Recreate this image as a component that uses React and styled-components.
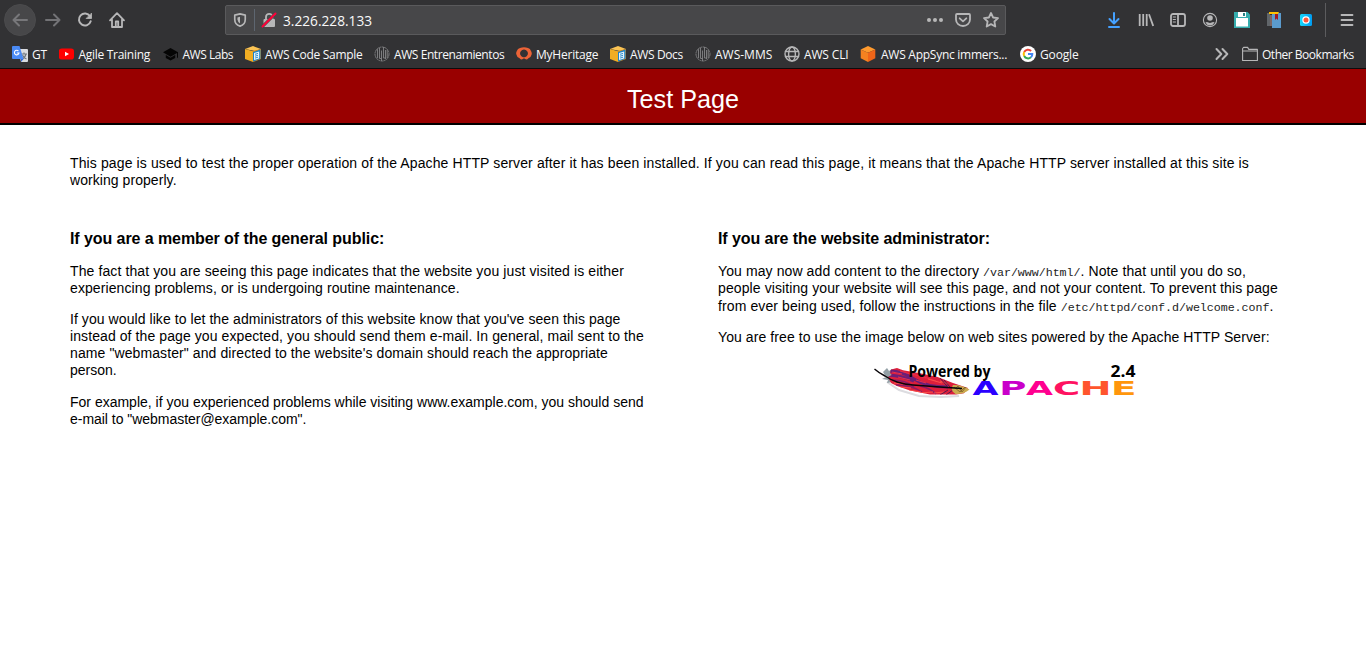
import React from 'react';
import styled, { createGlobalStyle } from 'styled-components';

const Global = createGlobalStyle`
  * { box-sizing: border-box; }
  body { margin: 0; background: #fff; color: #000; font-family: "Liberation Sans", Arial, sans-serif; overflow: hidden; }
  svg { display: block; flex: none; }
`;
const Page = styled.div`height: 665px; display: flex; flex-direction: column;`;
const Chrome = styled.div`
  height: 69px; background: #323234; border-bottom: 1px solid #0c0c0d; color: #f9f9fa;
  font-family: "Open Sans", "Noto Sans", sans-serif;
`;
const NavBar = styled.div`height: 40px; display: flex; align-items: center; padding: 0 11px 0 4px;`;
const BackButton = styled.div`
  width: 32px; height: 32px; border-radius: 50%; background: #474749; border: 1px solid #4b4b4d;
  display: flex; align-items: center; justify-content: center;
`;
const NavIcon = styled.div`width: 16px; margin-left: ${p => p.$gap ?? 16}px;`;
const AddressBar = styled.div`
  width: 781px; height: 30px; margin-left: 100px; padding: 0 6px 0 7px; display: flex; align-items: center;
  background: #474749; border: 1px solid #5a5a5c; border-radius: 2px;
`;
const AddressDivider = styled.div`width: 1px; height: 22px; background: #5e6670; margin: 0 6px 0 7px;`;
const Address = styled.div`flex: 1; margin-left: 6px; padding-top: 1px; font-size: 13.7px; line-height: 18px; white-space: nowrap;`;
const AddressActions = styled.div`display: flex; gap: 12px;`;
const Tools = styled.div`display: flex; gap: 16px; margin-left: 100px;`;
const ToolDivider = styled.div`width: 1px; height: 34px; background: #5c5c5e; margin: 0 13px 0 11px;`;
const BookmarkBar = styled.div`height: 28px; padding: 0 12px; display: flex; align-items: center;`;
const Bookmark = styled.div`
  width: ${p => p.$width}px; display: flex; align-items: center; gap: ${p => p.$gap ?? 4}px; flex: none;
  font-size: 12px; line-height: 18px; letter-spacing: ${p => p.$track ?? 0}px; white-space: nowrap;
  span { padding-top: 2px; }
`;
const Overflow = styled.div`margin-left: auto; margin-right: 12px;`;
const Banner = styled.header`
  height: 56px; background: #900; border-bottom: 2px solid #000; padding-top: 16px; color: #fff;
  h1 { margin: 0; font-size: 25.2px; line-height: 29px; font-weight: 400; text-align: center; }
`;
const Content = styled.main`padding: 30px 70px 0; font-size: 14px; line-height: 17px;`;
const Paragraph = styled.p`margin: 0 0 ${p => p.$after ?? 14}px;`;
const Line = styled.span`display: block; white-space: nowrap; letter-spacing: ${p => p.$track ?? 0}px; padding-top: ${p => p.$lead ?? 0}px;`;
const Columns = styled.div`display: grid; grid-template-columns: 578px 578px; column-gap: 70px; margin-top: 41px;`;
const Heading = styled.h2`margin: 0 0 15px; font-size: 16px; line-height: 18px; letter-spacing: -0.075px;`;
const Code = styled.code`font-family: "Liberation Mono", monospace; font-size: 11.67px; line-height: 1; letter-spacing: -0.04px; color: #222;`;
const Logo = styled.div`display: flex; justify-content: center; margin-top: 15px;`;

const Stroke = ({ children, color = '#b7b7b8', width = 2, size = 16 }) => (
  <svg width={size} height={size} viewBox="0 0 16 16" fill="none" stroke={color} strokeWidth={width} strokeLinecap="round" strokeLinejoin="round">{children}</svg>
);

const GT = () => (
  <svg width="16" height="16" viewBox="0 0 16 16">
    <path d="M6 3h9q1 0 1 1v11q0 1-1 1H9z" fill="#dadce0" />
    <path d="M9 8h6M12 6.5V8M14 8q-1 4-4 5M10.5 9q1 3 4 4" stroke="#70777f" fill="none" strokeWidth="1.1" />
    <path d="M1 0h6.5l4 13H1q-1 0-1-1V1q0-1 1-1z" fill="#4a8af4" />
    <path d="M9 13h2.5L9 16z" fill="#3367d6" />
    <path d="M6.4 5a2.3 2.3 0 1 0 .6 2H4.8" stroke="#fff" fill="none" strokeWidth="1.1" />
  </svg>
);
const YouTube = () => (
  <svg width="16" height="16" viewBox="0 0 16 16"><rect x="-.2" y="2.4" width="15.2" height="11.2" rx="2.8" fill="#f00" /><path d="M6 5.7v4.6L10 8z" fill="#fff" /></svg>
);
const Cap = () => (
  <svg width="16" height="16" viewBox="0 0 16 16" fill="#050505"><path d="M0 6.2 7.5 2 15 6.2v5l-1 1V7.1l-6.5 3.7z" /><path d="M2.8 8.9v3.2l4.7 2.3 4.7-2.3V8.9l-4.7 2.8z" /></svg>
);
const Cube = () => (
  <svg width="16" height="16" viewBox="0 0 16 16">
    <path d="M0 3 8 0l8 3-6 2z" fill="#fcc454" /><path d="M0 3l8 2.2V16L0 13z" fill="#f1ad22" /><path d="M8 5l8-2v10l-8 3z" fill="#dc8d18" />
    <path d="M8 6l7.5-2.4v9.2L8 15.5z" fill="#1c83c8" /><path d="M9 7l5.2-1.5v7L9 14z" fill="#e5f4fb" /><path d="M10 8.3 13 7.4M10 10.2l3-.9M10 12.1l3-.9" stroke="#1c83c8" strokeWidth=".9" />
  </svg>
);
const Disc = () => (
  <svg width="16" height="16" viewBox="0 0 16 16" fill="none" stroke="#858587" strokeWidth=".9">
    <circle cx="8" cy="8" r="7" strokeDasharray="2 .5" /><path d="M3.5 3.2v9M5.5 2v10.5M7.5 4.5V15M9.5 1v11M11.5 4v9M13.2 4v8" /><path d="M5.5 12.5h2M9.5 12h2" />
  </svg>
);
const Heritage = () => (
  <svg width="16" height="16" viewBox="0 0 16 16">
    <path fillRule="evenodd" d="M4 2Q8 .6 12 2q2.5.5 2.7 2.6 1.8 2.5.6 4.7-.4 2.5-2.9 3-1 1.3-2.3 1.2L8.5 12.6h-1l-1.6.9q-1.3.1-2.3-1.2Q1 11.8.7 9.3-.6 7.1 1.1 4.6 1.5 2.5 4 2zM7 11.2h2a3.9 3.9 0 1 0-2 0z" fill="#ec6337" />
  </svg>
);
const Globe = () => <Stroke width={1.4}><circle cx="8" cy="8" r="7" /><ellipse cx="8" cy="8" rx="3.4" ry="7" /><path d="M1.5 5.5h13M1.5 10.5h13" /></Stroke>;
const Hex = () => (
  <svg width="16" height="16" viewBox="0 0 16 16"><path d="M8 0l7.3 3.5L8 6.8.7 3.5z" fill="#ff9a2e" /><path d="M.7 3.5 8 6.8V16L.7 12.3z" fill="#f58220" /><path d="M8 6.8l7.3-3.3v8.8L8 16z" fill="#f06518" /></svg>
);
const Google = () => (
  <svg width="16" height="16" viewBox="0 0 16 16" fill="none" strokeWidth="2"><circle cx="8" cy="8" r="8" fill="#fff" /><path d="M4.2 6A4.3 4.3 0 0 1 11.1 5" stroke="#ea4335" /><path d="M4.2 6a4.3 4.3 0 0 0 0 4" stroke="#fbbc05" /><path d="M4.2 10a4.3 4.3 0 0 0 6.7 1.3" stroke="#34a853" /><path d="M8 8h4.3a4.3 4.3 0 0 1-1.4 3.3" stroke="#4285f4" /></svg>
);

const bookmarks = [
  ['GT', GT, 46.5, -0.2], ['Agile Training', YouTube, 104, -0.29], ['AWS Labs', Cap, 82.5, -0.48],
  ['AWS Code Sample', Cube, 129, -0.29], ['AWS Entrenamientos', Disc, 142, -0.42], ['MyHeritage', Heritage, 94, -0.22],
  ['AWS Docs', Cube, 85, -0.37], ['AWS-MMS', Disc, 89, 0], ['AWS CLI', Globe, 76, -0.15],
  ['AWS AppSync immers...', Hex, 160, -0.26, 5], ['Google', Google, 60, -0.15],
];

const apache = [
  ['A', 98.5, 26, '#2b00ff'], ['P', 125.3, 27.2, '#c900ca'], ['A', 152, 27, '#ff0090'],
  ['C', 179, 27.2, '#ff1261'], ['H', 205.5, 32, '#ff552d'], ['E', 236.9, 25.5, '#ff960b'],
];

const ApacheLogo = () => (
  <svg width="266" height="38" viewBox="0 -2 266 38">
    <defs>
      <clipPath id="vane"><path d="M17 6.5 23 5l6 2.3 17 3 17 3.5 16 6.2 15 5-4 5.2-8 1.3H56l-20-4-13-4.5-6-3-3-6 4-2-2-2z" /></clipPath>
    </defs>
    <path d="M13 19l12 8 20 6 22 1 18-1" stroke="#dcdce0" strokeWidth="2" fill="none" />
    <path d="M9 9l4-4 2 3 3-2v13l-5 1 1-3-6-1 4-2z" fill="#93a0a6" />
    <g clipPath="url(#vane)" fill="none">
      <path d="M0 0h96v36H0z" fill="#dc1f3c" />
      <path d="M16 8q12 0 24 8t34 8M14 12q15 1 26 6" stroke="#6b1f78" strokeWidth="3.2" />
      <path d="M22 22q16 0 26 7M18 17q14 0 22 7M46 23q10 2 16 8" stroke="#8b1b67" strokeWidth="1.4" />
      <path d="M18 9l10 2M26 8l14 4M38 11l14 4M50 14l12 4M24 14l12 3M42 17l10 3" stroke="#e8304a" />
      <path d="M20 20l9 1M25 24l12 1M34 27l13 2M46 30l13-1M60 30l10-1M54 16l14 4M66 18l8 3" stroke="#fb5148" />
      <path d="M66 15l7 8M70 17l6 7M66 32l8-5M72 32l7-5" stroke="#54194e" />
    </g>
    <path d="M79 22q8-.5 16.5 4.5-6 5-14 4.5-6-4-2.5-9z" fill="#cbac50" />
    <path d="M81 26l3-3 4 6 4-5M80 24l6 5 5-5" stroke="#795b24" fill="none" strokeWidth=".8" />
    <path d="M.5 6Q5 10 11 13q6 4 12 6 8 2.5 16 3l27 2 22 1.5" fill="none" stroke="#080508" strokeWidth="1.4" />
    <g fontFamily="Open Sans, Noto Sans, sans-serif" fontWeight="700" fontSize="15.5" fill="#000">
      <text x="34.5" y="14" textLength="82" lengthAdjust="spacingAndGlyphs">Powered by</text>
      <text x="236.5" y="14" textLength="25" lengthAdjust="spacingAndGlyphs">2.4</text>
    </g>
    <g fontFamily="DejaVu Sans, sans-serif" fontWeight="700" fontSize="18.6">
      {apache.map(([c, x, w, fill], i) => (
        <text key={i} x={x} y="32" fill={fill} textLength={w} lengthAdjust="spacingAndGlyphs">{c}</text>
      ))}
    </g>
  </svg>
);

export default function App() {
  return (
    <Page>
      <Global />
      <Chrome>
        <NavBar>
          <BackButton><Stroke color="#77777a"><path d="M15 8H1.5M7 2.5 1.5 8 7 13.5" /></Stroke></BackButton>
          <NavIcon $gap={9}><Stroke color="#737376"><path d="M1 8h13.5M9 2.5 14.5 8 9 13.5" /></Stroke></NavIcon>
          <NavIcon><Stroke><path d="M13.7 9.3A6 6 0 1 1 13 4.3" /><path d="M14.5 1.5v5h-5z" fill="#b7b7b8" strokeWidth=".8" /></Stroke></NavIcon>
          <NavIcon><Stroke width={1.8}><path d="M1 8.3 8 1.2l7 7.1M3 7.5V15h10V7.5" /><path d="M6.8 14.5v-5h2.4v5M9 12h.2" /></Stroke></NavIcon>
          <AddressBar>
            <Stroke size={14} width={1.9}><path d="M8 1 14 2.4v4.9Q14 13 8 15 2 13 2 7.3V2.4z" /><path d="M8 4.3v7.6Q5.4 10 5.1 7.3V5z" fill="#b7b7b8" stroke="none" /></Stroke>
            <AddressDivider />
            <svg width="16" height="16" viewBox="0 0 16 16"><rect x="2.5" y="7" width="11.5" height="8" rx="1" fill="#b7b7b8" /><path d="M5 8V5a3.2 3.2 0 0 1 6.4 0v3" fill="none" stroke="#b7b7b8" strokeWidth="1.8" /><path d="M1.5 14.5 14.5 1.5" stroke="#474749" strokeWidth="3" /><path d="M1.5 14.5 14.5 1.5" stroke="#ff0039" strokeWidth="2" strokeLinecap="round" /></svg>
            <Address>3.226.228.133</Address>
            <AddressActions>
              <svg width="16" height="16" viewBox="0 0 16 16" fill="#b7b7b8"><circle cx="2" cy="8" r="2" /><circle cx="8" cy="8" r="2" /><circle cx="14" cy="8" r="2" /></svg>
              <Stroke width={1.8}><path d="M2 2h12q1 0 1 1v4.5a7 6.5 0 0 1-14 0V3q0-1 1-1z" /><path d="m4.7 6.3 3.3 3 3.3-3" /></Stroke>
              <Stroke width={1.8}><path d="m8 1 2.1 4.5 4.9.6-3.6 3.4.9 5L8 12.1l-4.3 2.4.9-5L1 6.1l4.9-.6z" /></Stroke>
            </AddressActions>
          </AddressBar>
          <Tools>
            <Stroke color="#45a1ff"><path d="M8 1v10M3.5 7 8 11.5 12.5 7M3 15h10" /></Stroke>
            <Stroke width={1.8}><path d="M1.7 2v12M5.2 2v12M8.7 2v12M11 2.3 15.2 14" strokeLinecap="butt" /></Stroke>
            <Stroke width={1.8}><rect x="1" y="2" width="14" height="12" rx="2" /><path d="M8 2v12" /><path d="M3.2 5h2.3M3.2 7.5h2.3M3.2 10h2.3" strokeWidth="1" /></Stroke>
            <svg width="16" height="16" viewBox="0 0 16 16" fill="#b7b7b8"><circle cx="8" cy="8" r="6.6" fill="none" stroke="#b7b7b8" strokeWidth="1.1" /><circle cx="8" cy="6" r="2.8" /><path d="M3.4 10.5q1.6-1 3 0 1.6.8 3.2 0 1.5-1 3 0Q11 13.5 8 13.5t-4.6-3z" /></svg>
            <svg width="16" height="16" viewBox="0 0 16 16"><path d="M0 0h13.5L16 2.5V16H0z" fill="#35acad" /><path d="M4 0h8v5H4zM2 8h12v6.5H2z" fill="#fff" /><path d="M2 6h12v3H2z" fill="#fff" /><path d="M9 1h2v3H9z" fill="#267f83" /></svg>
            <svg width="16" height="16" viewBox="0 0 16 16"><path d="M1 1h3v13H1z" fill="#606569" /><path d="M4 3h2v11H4z" fill="#7d6664" /><path d="M6 1h9v15H6z" fill="#5b9bcd" /><path d="M3 0h10l-1 2H3z" fill="#ffc000" /><path d="M9 2h3v6l-1.5-1.5L9 8z" fill="#a01824" /></svg>
            <svg width="16" height="16" viewBox="0 0 16 16"><defs><linearGradient id="rec"><stop stopColor="#18d8fb" /><stop offset="1" stopColor="#009bf1" /></linearGradient></defs><rect x="2" y="2" width="12" height="12" rx="1.5" fill="url(#rec)" /><circle cx="8" cy="8" r="3.1" fill="#ff5438" stroke="#fff" strokeWidth="1.2" /></svg>
          </Tools>
          <ToolDivider />
          <Stroke width={1.8}><path d="M2.5 3h11M2.5 8h11M2.5 13h11" /></Stroke>
        </NavBar>
        <BookmarkBar>
          {bookmarks.map(([name, Icon, width, track, gap]) => (
            <Bookmark key={name} $width={width} $track={track} $gap={gap}><Icon /><span>{name}</span></Bookmark>
          ))}
          <Overflow><Stroke><path d="m2.5 3 4.8 5-4.8 5M8.5 3l4.8 5-4.8 5" /></Stroke></Overflow>
          <Bookmark $width={112} $track={-0.48}><Stroke width={1.1}><path d="M.6 14.5V2.5L1.6 1.4h4l1.2 2h8.6v11zM.6 5h14.8" /></Stroke><span>Other Bookmarks</span></Bookmark>
        </BookmarkBar>
      </Chrome>
      <Banner><h1>Test Page</h1></Banner>
      <Content>
        <Paragraph>
          <Line $track={0.1205}>This page is used to test the proper operation of the Apache HTTP server after it has been installed. If you can read this page, it means that the Apache HTTP server installed at this site is</Line>
          <Line $track={0.06}>working properly.</Line>
        </Paragraph>
        <Columns>
          <section>
            <Heading>If you are a member of the general public:</Heading>
            <Paragraph>
              <Line $track={0.108}>The fact that you are seeing this page indicates that the website you just visited is either</Line>
              <Line $track={0.1}>experiencing problems, or is undergoing routine maintenance.</Line>
            </Paragraph>
            <Paragraph $after={15}>
              <Line $track={0.067}>If you would like to let the administrators of this website know that you've seen this page</Line>
              <Line $track={0.088}>instead of the page you expected, you should send them e-mail. In general, mail sent to the</Line>
              <Line $track={0.095}>name "webmaster" and directed to the website's domain should reach the appropriate</Line>
              <Line>person.</Line>
            </Paragraph>
            <Paragraph>
              <Line>For example, if you experienced problems while visiting www.example.com, you should send</Line>
              <Line $track={-0.03}>e-mail to "webmaster@example.com".</Line>
            </Paragraph>
          </section>
          <section>
            <Heading>If you are the website administrator:</Heading>
            <Paragraph>
              <Line $track={0.1}>You may now add content to the directory <Code>/var/www/html/</Code>. Note that until you do so,</Line>
              <Line $track={0.1}>people visiting your website will see this page, and not your content. To prevent this page</Line>
              <Line $track={0.1} $lead={1}>from ever being used, follow the instructions in the file <Code>/etc/httpd/conf.d/welcome.conf</Code>.</Line>
            </Paragraph>
            <Paragraph><Line $track={0.083}>You are free to use the image below on web sites powered by the Apache HTTP Server:</Line></Paragraph>
            <Logo><ApacheLogo /></Logo>
          </section>
        </Columns>
      </Content>
    </Page>
  );
}
